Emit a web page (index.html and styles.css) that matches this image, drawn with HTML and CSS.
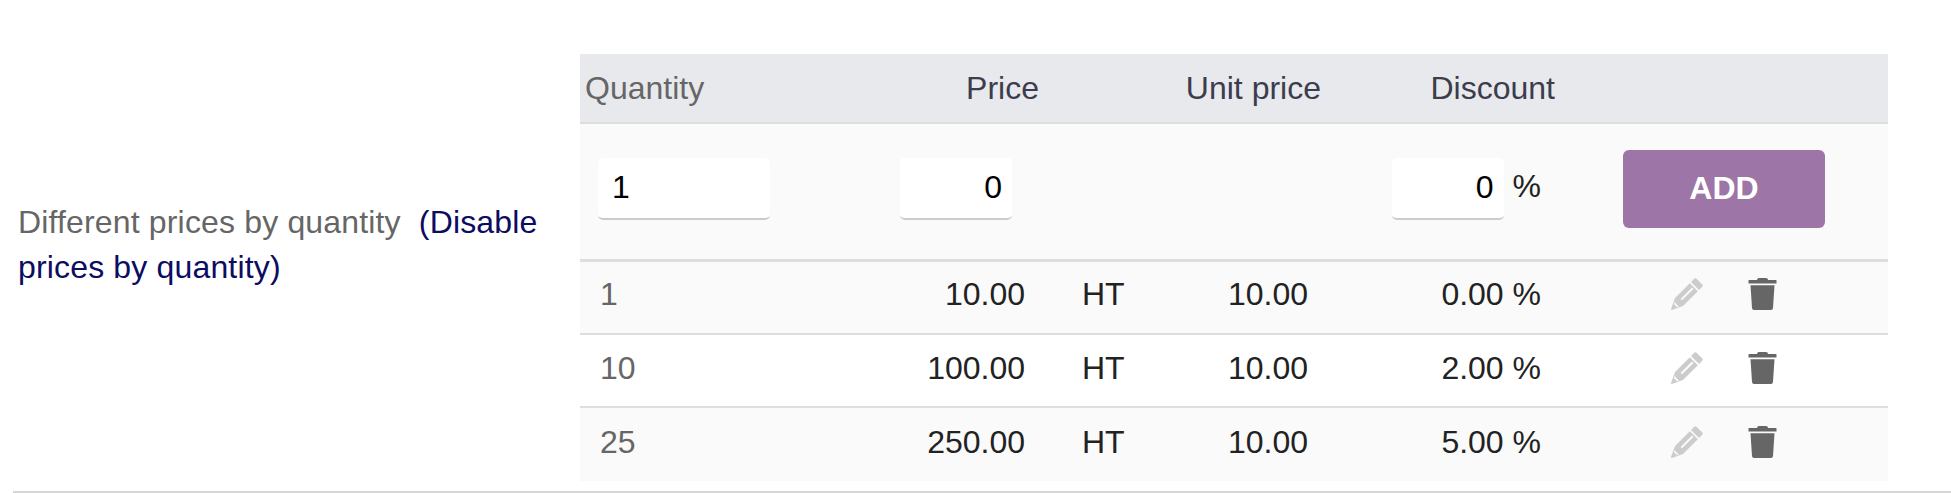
FILE: index.html
```html
<!DOCTYPE html>
<html lang="en">
<head>
<meta charset="utf-8">
<title>Prices by quantity</title>
<link rel="stylesheet" href="styles.css">
</head>
<body>
<div class="field">
  <div class="label">Different prices by quantity&nbsp; <a href="#">(Disable prices by quantity)</a></div>
  <table class="prices">
    <colgroup>
      <col class="c-qty"><col class="c-price"><col class="c-ht"><col class="c-unit"><col class="c-disc"><col class="c-act">
    </colgroup>
    <thead>
      <tr>
        <th class="qty-head">Quantity</th>
        <th class="price-head">Price</th>
        <th></th>
        <th class="unit-head">Unit price</th>
        <th class="disc-head">Discount</th>
        <th></th>
      </tr>
    </thead>
    <tbody>
      <tr class="entry shade">
        <td class="in-qty"><input class="inp w-qty" type="text" value="1"></td>
        <td class="in-price"><input class="inp w-price right" type="text" value="0"></td>
        <td></td>
        <td></td>
        <td class="disc"><input class="inp w-disc right" type="text" value="0"> %</td>
        <td class="act"><button class="add" type="button">ADD</button></td>
      </tr>
      <tr class="shade">
        <td class="qty">1</td><td class="num">10.00</td><td class="ht">HT</td><td class="unit">10.00</td><td class="disc">0.00 %</td>
        <td class="icons">
          <svg class="ic pen" viewBox="0 0 32 32"><path fill-rule="evenodd" d="M20 4 l3.5-3.5 q1-.5 2 .2 l5.8 5.8 q.7 1 .2 2 L28 12 z M18.8 5.2 L26.8 13.2 L12 28 L1 32 Q0 32 0 31 L4 20 z M21 9.5 l1.4 1.4 L11 22.3 l-1.4-1.4 z M3.6 24 L5 25.8 L6.2 27 L8 28.4 L6 29.2 L4.6 27.4 L2.8 26 z"/></svg>
          <svg class="ic bin" viewBox="0 0 29 32"><path d="M9 2 Q9 0 11 0 h7 Q20 0 20 2 h8 Q28.5 2 28.5 2.5 V5.5 H.5 V2.5 Q.5 2 1 2 z M2.5 7.2 H26.5 L25 30 Q24.8 32 23 32 H6 Q4.2 32 4 30 z"/></svg>
        </td>
      </tr>
      <tr class="plain">
        <td class="qty">10</td><td class="num">100.00</td><td class="ht">HT</td><td class="unit">10.00</td><td class="disc">2.00 %</td>
        <td class="icons">
          <svg class="ic pen" viewBox="0 0 32 32"><path fill-rule="evenodd" d="M20 4 l3.5-3.5 q1-.5 2 .2 l5.8 5.8 q.7 1 .2 2 L28 12 z M18.8 5.2 L26.8 13.2 L12 28 L1 32 Q0 32 0 31 L4 20 z M21 9.5 l1.4 1.4 L11 22.3 l-1.4-1.4 z M3.6 24 L5 25.8 L6.2 27 L8 28.4 L6 29.2 L4.6 27.4 L2.8 26 z"/></svg>
          <svg class="ic bin" viewBox="0 0 29 32"><path d="M9 2 Q9 0 11 0 h7 Q20 0 20 2 h8 Q28.5 2 28.5 2.5 V5.5 H.5 V2.5 Q.5 2 1 2 z M2.5 7.2 H26.5 L25 30 Q24.8 32 23 32 H6 Q4.2 32 4 30 z"/></svg>
        </td>
      </tr>
      <tr class="shade">
        <td class="qty">25</td><td class="num">250.00</td><td class="ht">HT</td><td class="unit">10.00</td><td class="disc">5.00 %</td>
        <td class="icons">
          <svg class="ic pen" viewBox="0 0 32 32"><path fill-rule="evenodd" d="M20 4 l3.5-3.5 q1-.5 2 .2 l5.8 5.8 q.7 1 .2 2 L28 12 z M18.8 5.2 L26.8 13.2 L12 28 L1 32 Q0 32 0 31 L4 20 z M21 9.5 l1.4 1.4 L11 22.3 l-1.4-1.4 z M3.6 24 L5 25.8 L6.2 27 L8 28.4 L6 29.2 L4.6 27.4 L2.8 26 z"/></svg>
          <svg class="ic bin" viewBox="0 0 29 32"><path d="M9 2 Q9 0 11 0 h7 Q20 0 20 2 h8 Q28.5 2 28.5 2.5 V5.5 H.5 V2.5 Q.5 2 1 2 z M2.5 7.2 H26.5 L25 30 Q24.8 32 23 32 H6 Q4.2 32 4 30 z"/></svg>
        </td>
      </tr>
    </tbody>
  </table>
</div>
</body>
</html>
```
FILE: styles.css
```css
* { box-sizing: border-box; }
html, body { margin: 0; padding: 0; background: #fff; }
body { height: 493px; overflow: hidden; font: 32px/45px "Liberation Sans", Arial, sans-serif; color: #222; }
.field {
  display: flex;
  align-items: flex-start;
  margin: 0 0 0 13px;
  padding: 54px 63px 0 5px;
  width: 1938px;
  height: 493px;
  border-bottom: 2px solid #d6d6d6;
}
.label { width: 562px; flex: none; padding-right: 20px; color: #666; margin-top: 146px; letter-spacing: .16px; }
.label a { color: #0c0c60; text-decoration: none; }
.prices { width: 1308px; flex: none; table-layout: fixed; border-collapse: collapse; }
.c-qty { width: 305px; } .c-price { width: 165px; } .c-ht { width: 120px; } .c-unit { width: 160px; } .c-disc { width: 230px; } .c-act { width: 328px; }
th { height: 69px; padding: 0; background: #e8e9ed; border-bottom: 2px solid #dedede; font-weight: 400; color: #3c3c4c; }
.qty-head { text-align: left; padding-left: 5px; color: #666; }
.price-head { text-align: right; padding-right: 11px; }
.unit-head { text-align: right; padding-right: 9px; }
.disc-head { text-align: right; padding-right: 5px; }
td { height: 74px; padding: 0 0 5px; border-bottom: 2px solid #dedede; }
.shade { background: #fafafa; }
tbody tr:last-child td { border-bottom: 0; }
.entry td { height: 137px; border-bottom-width: 3px; }
.plain td { height: 73px; }
.qty { padding-left: 20px; color: #666; }
.num { text-align: right; padding-right: 25px; }
.ht { padding-left: 32px; }
.unit { text-align: right; padding-right: 22px; }
.disc { text-align: right; padding-right: 19px; white-space: nowrap; }
.in-qty { padding-left: 18px; }
.in-price { text-align: right; padding-right: 38px; }
.inp {
  height: 62px;
  border: 0;
  border-bottom: 2px solid #ccc;
  border-radius: 5px;
  background: #fff;
  font: 32px "Liberation Sans", Arial, sans-serif;
  color: #000;
  padding: 0 10px 0 14px;
  vertical-align: middle;
  outline: 0;
}
.right { text-align: right; }
.w-qty { width: 172px; }
.w-price { width: 112px; }
.w-disc { width: 112px; }
.act { padding-left: 63px; }
.add {
  display: block;
  width: 202px;
  height: 78px;
  border: 0;
  border-radius: 6px;
  background: #9e75a7;
  color: #fff;
  font: 700 32px "Liberation Sans", Arial, sans-serif;
}
.icons { padding-left: 111px; }
.ic { display: inline-block; height: 32px; vertical-align: middle; margin-bottom: 5px; }
.pen { width: 32px; fill: #ccc; margin-right: 36px; }
.bin { width: 29px; fill: #666; }
```
